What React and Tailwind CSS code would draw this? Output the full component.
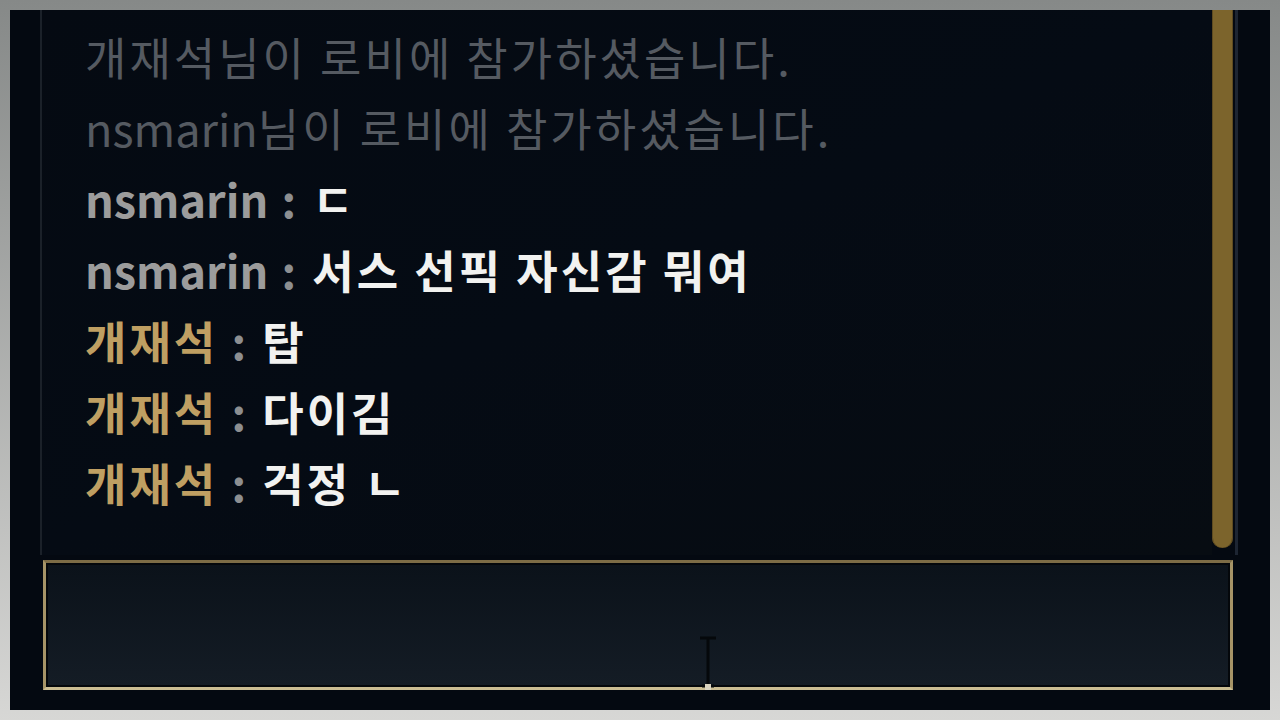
import React from "react";

const lines = [
  { type: "sys", name: "개재석", text: "님이 로비에 참가하셨습니다." },
  { type: "sys", name: "nsmarin", text: "님이 로비에 참가하셨습니다." },
  { type: "chat", name: "nsmarin", gold: false, text: "ㄷ" },
  { type: "chat", name: "nsmarin", gold: false, text: "서스 선픽 자신감 뭐여" },
  { type: "chat", name: "개재석", gold: true, text: "탑" },
  { type: "chat", name: "개재석", gold: true, text: "다이김" },
  { type: "chat", name: "개재석", gold: true, text: "걱정 ㄴ" },
];

// latin names keep normal spacing, korean text is a bit wider in the game font
const isLatin = (s) => /^[a-z]+$/i.test(s);

function ChatLine({ line }) {
  const nameTrack = isLatin(line.name) ? "" : "tracking-[3px]";
  if (line.type === "sys") {
    return (
      <div className="text-[#555a61] whitespace-nowrap">
        <span className={nameTrack}>{line.name}</span>
        <span className="tracking-[3px]">{line.text}</span>
      </div>
    );
  }
  return (
    <div className="font-bold whitespace-nowrap">
      <span className={`${nameTrack} ${line.gold ? "text-[#bf9f62]" : "text-[#9c9c9c]"}`}>{line.name}</span>
      <span className="text-[#8d8f91] tracking-[3px]"> : </span>
      <span className="text-[#f2f2f0] tracking-[3px]">{line.text}</span>
    </div>
  );
}

export default function App() {
  return (
    <div className="w-[1280px] h-[720px] bg-gradient-to-b from-[#868988] to-[#d7d7d5] pt-[10px] pl-[10px] pr-[10px] pb-[10px] flex">
      <div className="flex-1 flex flex-col bg-[#040911] pl-[30px] pr-[32px] pb-[20px]">
        {/* messages + scrollbar */}
        <div className="h-[545px] flex">
          <div className="w-[2px] bg-[#1b2129]" />
          <div
            className="flex-1 pl-[43px] pt-[11px] text-[45px] leading-[71px] overflow-hidden bg-gradient-to-br from-[#050a12] via-[#050b14] to-[#070c12]"
            style={{ fontFamily: '"Noto Sans CJK KR", "Noto Sans", sans-serif' }}
          >
            {lines.map((l, i) => (
              <ChatLine key={i} line={l} />
            ))}
          </div>
          <div className="w-[21px]">
            <div className="h-[538px] bg-[#7c642c] rounded-b-full shadow-[inset_1px_0_0_#5e4b20,inset_-1px_0_0_#5e4b20]" />
          </div>
          <div className="w-[2px]" />
          <div className="w-[3px] bg-[#1d2532]" />
        </div>

        {/* input box */}
        <div className="mt-[5px] ml-[3px] mr-[5px] h-[130px] relative border-[3px] border-t-[#7d6c46] border-l-[#a69467] border-r-[#a69467] border-b-[#cbbd93]">
          <div className="absolute inset-0 border-2 border-[#04070b] bg-gradient-to-b from-[#0b121a] to-[#141c25]" />
          <svg className="absolute left-[650px] top-[73px]" width="24" height="56" viewBox="0 0 24 56">
            <path d="M4 2h16M12 2v48M6 50h4M14 50h4" stroke="#05080b" strokeWidth="3" fill="none" />
            <rect x="9" y="48" width="6" height="6" fill="#d9d3c0" />
          </svg>
        </div>
      </div>
    </div>
  );
}
